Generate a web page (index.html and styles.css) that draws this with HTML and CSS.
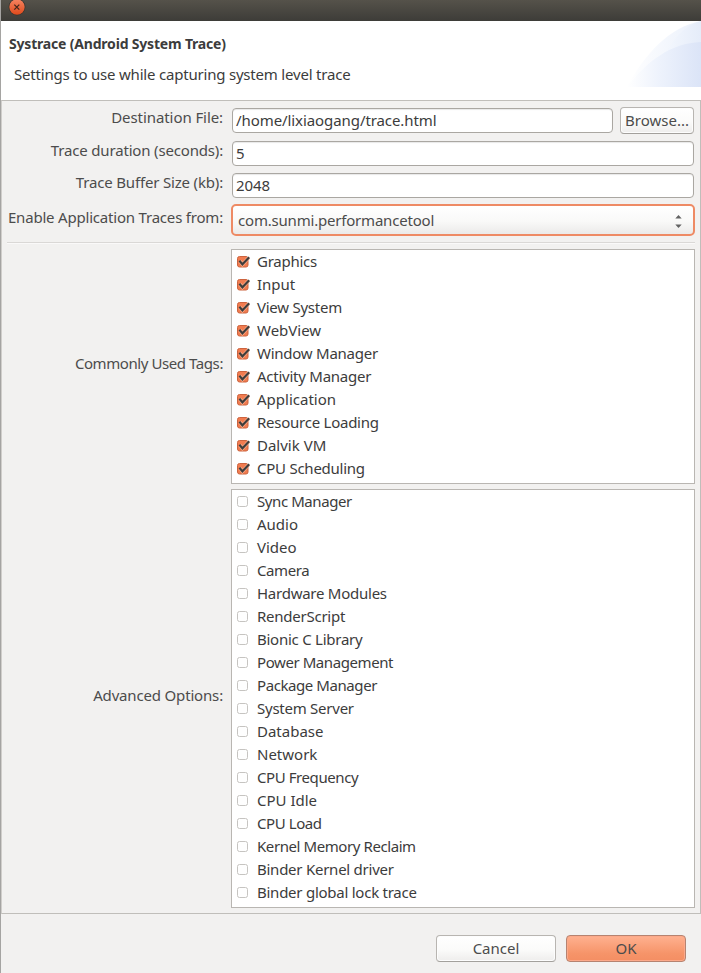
FILE: index.html
```html
<!DOCTYPE html>
<html lang="en">
<head>
<meta charset="utf-8">
<title>Systrace</title>
<link rel="stylesheet" href="styles.css">
</head>
<body>
<div class="window">
  <div class="titlebar">
    <svg class="close" width="18" height="18" viewBox="0 0 18 18">
      <defs><linearGradient id="cg" x1="0" y1="0" x2="0" y2="1"><stop offset="0" stop-color="#f58461"/><stop offset="1" stop-color="#df4a1c"/></linearGradient></defs>
      <circle cx="9" cy="9" r="8.4" fill="#34332e"/><circle cx="9" cy="9" r="7.7" fill="url(#cg)"/>
      <path d="M6.3 6.6l5 5M11.3 6.6l-5 5" stroke="#45271c" stroke-width="1.3"/>
    </svg>
  </div>
  <header class="header">
    <div>
      <h1><span class="t">Systrace (Android System Trace)</span></h1>
      <p><span class="t">Settings to use while capturing system level trace</span></p>
    </div>
    <svg class="banner" width="74" height="66" viewBox="0 0 74 66">
      <defs>
        <linearGradient id="b1" x1="0" x2="1"><stop offset="0" stop-color="#fff"/><stop offset="1" stop-color="#eaf0fb"/></linearGradient>
        <linearGradient id="b2" x1="0" x2="1"><stop offset="0" stop-color="#f7faff"/><stop offset="1" stop-color="#e5ecf9"/></linearGradient>
        <linearGradient id="b3" x1="0" x2="1"><stop offset="0" stop-color="#fff"/><stop offset=".45" stop-color="#edf2fc"/><stop offset="1" stop-color="#dbe4f7"/></linearGradient>
      </defs>
      <path d="M0 66C17 34 42 6 74 0V66Z" fill="url(#b1)"/>
      <path d="M36 38C45 18 58 4 74 0V66H30Z" fill="url(#b2)"/>
      <path d="M0 66C20 40 44 22 74 21V66Z" fill="url(#b3)"/>
    </svg>
  </header>
  <main class="panel">
    <div class="row r1"><label><span class="t">Destination File:</span></label><div class="input"><span class="t">/home/lixiaogang/trace.html</span></div><div class="button browse"><span class="t">Browse...</span></div></div>
    <div class="row r2"><label><span class="t">Trace duration (seconds):</span></label><div class="input"><span class="t">5</span></div></div>
    <div class="row r3"><label><span class="t">Trace Buffer Size (kb):</span></label><div class="input"><span class="t">2048</span></div></div>
    <div class="row r4"><label><span class="t">Enable Application Traces from:</span></label><div class="combo"><span class="t">com.sunmi.performancetool</span><svg width="7" height="13" viewBox="0 0 7 13"><path d="M.3 3.5L3.5 0 6.7 3.5ZM.3 9.5L3.5 13 6.7 9.5Z" fill="#626262"/></svg></div></div>
    <div class="rule"></div>
    <div class="row tags"><label><span class="t">Commonly Used Tags:</span></label><ul class="list on" id="common"></ul></div>
    <div class="row advanced"><label><span class="t">Advanced Options:</span></label><ul class="list" id="advanced"></ul></div>
  </main>
  <footer class="footer">
    <div class="button"><span class="t">Cancel</span></div>
    <div class="button ok"><span class="t">OK</span></div>
  </footer>
</div>
<script src="app.js"></script>
</body>
</html>
```
FILE: styles.css
```css
* { box-sizing: border-box; }
body { margin: 0; background: #f2f1f0; font: 15px/23px "Noto Sans", "Open Sans", sans-serif; color: #3c3c3c; overflow: hidden; }
.window { height: 973px; border-left: 1px solid #a5a4a2; display: flex; flex-direction: column; }
.t { display: inline-block; white-space: nowrap; }
.titlebar { height: 21px; flex: none; background: linear-gradient(#55524a, #3d3c38); padding-left: 6.5px; overflow: hidden; }
.close { display: block; margin-top: -2px; }
.header { height: 79px; flex: none; background: #fff; display: flex; justify-content: space-between; }
h1 { margin: 11px 0 0 8px; font-size: 14px; line-height: 23px; font-weight: 700; letter-spacing: -0.19px; }
p { margin: 8px 0 0 13px; letter-spacing: -0.2px; }
h1, p { height: 23px; }
.banner { display: block; }
.panel { height: 814px; flex: none; border: 1px solid #c0beba; border-left-color: #d0cecb; padding: 7px 5px 0 5px; display: flex; flex-direction: column; }
.row { display: flex; flex: none; }
label { width: 216px; margin-right: 8px; flex: none; text-align: right; color: #4c4c4c; letter-spacing: -0.17px; }
.r1 { height: 33px; }
.r2, .r3 { height: 32px; }
.r4 { height: 37px; margin-top: -1px; }
.r1 label { letter-spacing: -0.08px; }
.r1 label, .r2 label, .r3 label { margin-top: -2px; }
.r4 label { margin-top: 2px; letter-spacing: -0.2px; }
.input { height: 25px; flex: 1; margin: 0 1px; background: #fff; border: 1px solid #aaa7a2; border-radius: 4px; padding-left: 3px; line-height: 22px; box-shadow: inset 0 1px 1px #e8e8e8; letter-spacing: -0.08px; }
.input .t { line-height: 22px; }
.r1 .input { margin-right: 7px; }
.button { height: 27px; width: 120px; border: 1px solid #b8b5b1; border-bottom-color: #a3a09c; border-radius: 4px; background: linear-gradient(#fff, #fbfbfa 55%, #eeedec); text-align: center; line-height: 24px; color: #4c4c4c; box-shadow: inset 0 0 0 1px #fdfdfd; }
.browse { width: 74px; flex: none; margin: -1px 1px 0 0; }
.ok { border-color: #b68370; background: linear-gradient(#ffb190, #f69469 70%, #f48e63); box-shadow: inset 0 0 0 1px #fca98a; }
.combo { flex: 1; height: 32px; border: 2px solid #ee8a64; border-radius: 5px; background: linear-gradient(#fff, #f9f9f8 55%, #ebeae9); display: flex; justify-content: space-between; align-items: center; padding: 0 11px 0 5px; color: #4c4c4c; letter-spacing: -0.2px; }
.combo svg { margin-top: 3px; }
.rule { height: 2px; flex: none; border-top: 1px solid #dad8d6; border-bottom: 1px solid #faf9f9; margin: 1px 0 5px; }
.row.tags { height: 235px; margin-bottom: 5px; }
.tags label, .advanced label { align-self: center; padding-bottom: 6px; }
.tags label { letter-spacing: -0.42px; }
.row.advanced { height: 419px; }
.list { list-style: none; margin: 0; padding: 0 0 0 5px; flex: 1; background: #fff; border: 1px solid #b9b6b2; }
.list li { height: 23px; display: flex; align-items: center; }
.tight { letter-spacing: -0.25px; }
.tighter { letter-spacing: -0.42px; }
.box { display: block; margin-right: 7px; flex: none; }
.footer { display: flex; justify-content: flex-end; gap: 10px; padding: 21px 15px 0 0; }
```
FILE: app.js
```js
const common = ["Graphics", "Input", "View System", "WebView", "Window Manager", "Activity Manager", "Application", "Resource Loading", "Dalvik VM", "CPU Scheduling"];
const advanced = ["Sync Manager", "Audio", "Video", "Camera", "Hardware Modules", "RenderScript", "Bionic C Library", "Power Management", "Package Manager", "System Server", "Database", "Network", "CPU Frequency", "CPU Idle", "CPU Load", "Kernel Memory Reclaim", "Binder Kernel driver", "Binder global lock trace"];
const tighter = ["Sync Manager", "Camera", "Power Management", "Package Manager", "CPU Frequency", "CPU Load", "Kernel Memory Reclaim"];
const loose = ["Input", "WebView", "Application", "Dalvik VM", "Audio", "Video", "Database", "Network", "CPU Idle"];
const checked = '<svg class="box" width="13" height="12" viewBox="0 0 13 12"><rect x=".5" y=".5" width="10.5" height="10.5" rx="2" fill="#f17c50" stroke="#cc643f"/><path d="M2.8 5L5.4 8.4 11.8 1.6" fill="none" stroke="#fbb798" stroke-width="3.4"/><path d="M2.4 4.8L5.4 8.3 12.2 1.2" fill="none" stroke="#403c3a" stroke-width="2.2"/></svg>';
const empty = '<svg class="box" width="13" height="12" viewBox="0 0 13 12"><rect x=".5" y=".5" width="10" height="10" rx="2" fill="#fefefe" stroke="#c6c4c1"/></svg>';
function spacing(name) {
  if (tighter.includes(name)) return "t tighter";
  return loose.includes(name) ? "t" : "t tight";
}
function fill(id, names, box) {
  document.getElementById(id).innerHTML = names.map(n => `<li>${box}<span class="${spacing(n)}">${n}</span></li>`).join("");
}
fill("common", common, checked);
fill("advanced", advanced, empty);
```
